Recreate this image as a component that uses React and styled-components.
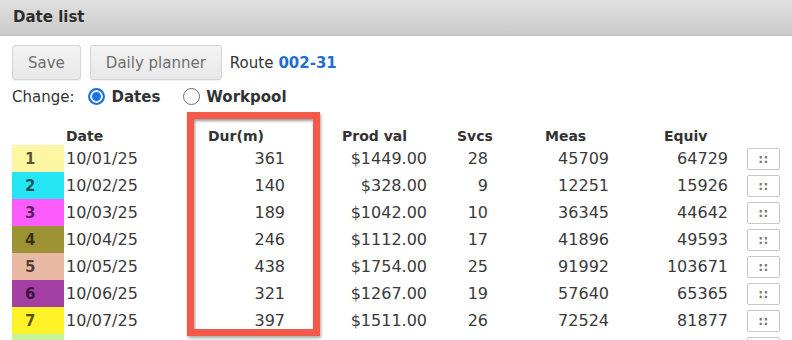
import React from "react";
import styled, { createGlobalStyle } from "styled-components";

const Global = createGlobalStyle`
  html, body { margin: 0; padding: 0; background: #fff; }
  body { font-family: "DejaVu Sans", Verdana, sans-serif; color: #333; width: 792px; height: 340px; overflow: hidden; }
`;

const Page = styled.div`
  position: relative;
  width: 792px;
  height: 340px;
  overflow: hidden;
`;

const TitleBar = styled.div`
  height: 34px;
  border-bottom: 2px solid #c3c3c3;
  background: linear-gradient(#e0e0e0, #cbcbcb);
  display: flex;
  align-items: center;
  padding-left: 13px;
  font-size: 15px;
  font-weight: bold;
  color: #2e2e2e;
`;

const Body = styled.div`
  padding: 9px 12px 0 12px;
`;

const Toolbar = styled.div`
  display: flex;
  align-items: center;
  gap: 9px;
  height: 35px;
`;

const Button = styled.button`
  height: 35px;
  padding: 0 15px;
  border: 1px solid #d4d4d4;
  border-radius: 3px;
  background: linear-gradient(#f3f3f3, #e8e8e8);
  color: #6f6f6f;
  font-family: inherit;
  font-size: 15px;
  box-shadow: 0 1px 1px rgba(0, 0, 0, 0.06);
`;

const RouteLabel = styled.span`
  font-size: 15px;
  color: #333;
  margin-left: -1px;
`;

const RouteCode = styled.span`
  font-weight: bold;
  color: #1f6fd0;
  margin-left: 5px;
`;

const ChangeRow = styled.div`
  display: flex;
  align-items: center;
  height: 18px;
  margin-top: 8px;
  font-size: 15px;
`;

const ChangeLabel = styled.span`
  margin-right: 14px;
`;

const RadioOption = styled.label`
  display: inline-flex;
  align-items: center;
  gap: 6px;
  font-weight: bold;
  margin-right: ${(p) => p.$mr || 0}px;
`;

const RadioDot = styled.span`
  width: 17px;
  height: 17px;
  box-sizing: border-box;
  border-radius: 50%;
  border: ${(p) => (p.$on ? "2px solid #1a73e8" : "1.5px solid #6f6f6f")};
  background: ${(p) => (p.$on ? "#1a73e8" : "#fff")};
  box-shadow: ${(p) => (p.$on ? "inset 0 0 0 2px #fff" : "none")};
  margin-top: -2px;
`;

const Table = styled.table`
  margin-top: 22px;
  border-collapse: collapse;
  table-layout: fixed;
  width: 768px;
`;

const Th = styled.th`
  text-align: left;
  font-size: 14px;
  font-weight: bold;
  color: #333;
  height: 17px;
  padding: 0 0 0 ${(p) => p.$pl || 0}px;
  line-height: 17px;
`;

const Swatch = styled.td`
  background: ${(p) => p.$color};
  height: 27px;
  padding: 0 0 0 13px;
  font-size: 15px;
  font-weight: bold;
  color: rgba(0, 0, 0, 0.66);
  text-align: left;
  vertical-align: middle;
`;

const Td = styled.td`
  height: 27px;
  padding: 0 ${(p) => p.$pr || 0}px 0 ${(p) => p.$pl || 0}px;
  text-align: ${(p) => (p.$right ? "right" : "left")};
  font-size: 16px;
  color: #3a3a3a;
  vertical-align: middle;
  white-space: nowrap;
`;

const MenuButton = styled.button`
  width: 33px;
  height: 22px;
  padding: 0;
  border: 1px solid #c9c9c9;
  border-radius: 2px;
  background: #fff;
  color: #777;
  font-family: inherit;
  font-size: 12px;
  font-weight: bold;
  letter-spacing: 0.5px;
  line-height: 18px;
  display: block;
`;

const Highlight = styled.div`
  position: absolute;
  left: 187px;
  top: 112px;
  width: 133px;
  height: 224px;
  box-sizing: border-box;
  border: 7px solid #f35a49;
  box-shadow: 1px 2px 3px rgba(0, 0, 0, 0.35), inset 1px 2px 3px rgba(0, 0, 0, 0.4);
  pointer-events: none;
`;

const rows = [
  ["#fdf6a3", "10/01/25", 361, "$1449.00", 28, 45709, 64729],
  ["#26e6f6", "10/02/25", 140, "$328.00", 9, 12251, 15926],
  ["#fb5cfb", "10/03/25", 189, "$1042.00", 10, 36345, 44642],
  ["#9d9334", "10/04/25", 246, "$1112.00", 17, 41896, 49593],
  ["#e9b9a3", "10/05/25", 438, "$1754.00", 25, 91992, 103671],
  ["#a43fa3", "10/06/25", 321, "$1267.00", 19, 57640, 65365],
  ["#fff226", "10/07/25", 397, "$1511.00", 26, 72524, 81877],
];

export default function App() {
  return (
    <Page>
      <Global />
      <TitleBar>Date list</TitleBar>
      <Body>
        <Toolbar>
          <Button>Save</Button>
          <Button>Daily planner</Button>
          <RouteLabel>
            Route<RouteCode>002-31</RouteCode>
          </RouteLabel>
        </Toolbar>
        <ChangeRow>
          <ChangeLabel>Change:</ChangeLabel>
          <RadioOption $mr={23}>
            <RadioDot $on />
            Dates
          </RadioOption>
          <RadioOption>
            <RadioDot />
            Workpool
          </RadioOption>
        </ChangeRow>
        <Table>
          <colgroup>
            <col style={{ width: 52 }} />
            <col style={{ width: 144 }} />
            <col style={{ width: 134 }} />
            <col style={{ width: 115 }} />
            <col style={{ width: 88 }} />
            <col style={{ width: 117 }} />
            <col style={{ width: 85 }} />
            <col style={{ width: 33 }} />
          </colgroup>
          <thead>
            <tr>
              <Th />
              <Th $pl={2}>Date</Th>
              <Th>Dur(m)</Th>
              <Th>Prod val</Th>
              <Th>Svcs</Th>
              <Th>Meas</Th>
              <Th $pl={2}>Equiv</Th>
              <Th />
            </tr>
          </thead>
          <tbody>
            {rows.map((r, i) => (
              <tr key={i}>
                <Swatch $color={r[0]}>{i + 1}</Swatch>
                <Td $pl={2}>{r[1]}</Td>
                <Td $right $pr={57}>{r[2]}</Td>
                <Td $right $pr={30}>{r[3]}</Td>
                <Td $right $pr={57}>{r[4]}</Td>
                <Td $right $pr={53}>{r[5]}</Td>
                <Td $right $pr={19}>{r[6]}</Td>
                <Td>
                  <MenuButton>::</MenuButton>
                </Td>
              </tr>
            ))}
            <tr>
              <Swatch $color="#c5f29a" />
              <Td />
              <Td />
              <Td />
              <Td />
              <Td />
              <Td />
              <Td>
                <MenuButton aria-label="menu" />
              </Td>
            </tr>
          </tbody>
        </Table>
      </Body>
      <Highlight />
    </Page>
  );
}
